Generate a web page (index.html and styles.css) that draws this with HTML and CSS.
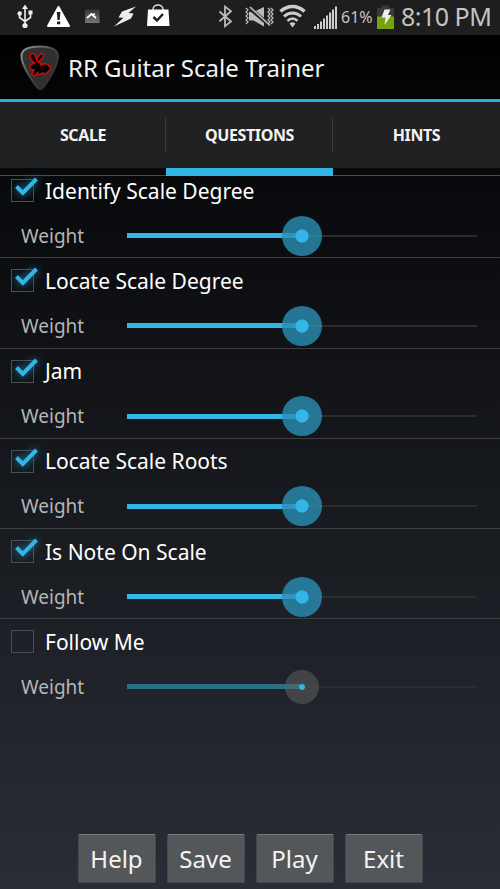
FILE: index.html
```html
<!DOCTYPE html>
<html lang="en">
<head>
<meta charset="utf-8">
<title>RR Guitar Scale Trainer</title>
<link rel="stylesheet" href="styles.css">
</head>
<body>
<div class="phone">
  <div class="status">
    <svg class="tray" width="180" height="34" viewBox="0 0 180 34">
      <g fill="none" stroke="#eee" stroke-width="1.6"><path d="M25 8v17M19.500 14v3.500l5.500 4 5.500-4V14"/></g>
      <g fill="#eee"><path d="M25 4.500l3 4.500h-6z"/><circle cx="25" cy="25.500" r="2.600"/><circle cx="19.700" cy="13.500" r="2.200"/><path d="M28.500 10.500h4v4h-4z"/></g>
      <path d="M58.500 7L69 26H48z" fill="#fff" stroke="#fff" stroke-width="2" stroke-linejoin="round"/>
      <path d="M56.800 12h3.600l-.7 8h-2.200zM57 21.500h3.200v2.800H57z" fill="#222"/>
      <path d="M85 9.500h14.500V23H85z" fill="url(#tile)"/>
      <path d="M87 18l4.500-4 4.500 4M92 15l3-1" fill="none" stroke="#fff" stroke-width="1.700"/>
      <path d="M136 6.500l-14 5-3.500 6 5 .3-9.500 8.700 17-8 2.500-5-5-.5z" fill="#eee"/>
      <path d="M153 11V9.500c0-6 10-6 10 0V11" fill="none" stroke="#ddd" stroke-width="1.500"/>
      <path d="M148 9.500h20.500l1 16.500h-22.500z" fill="#fff"/>
      <path d="M153.500 17l3.500 3.500 6-6.500" fill="none" stroke="#222" stroke-width="2.500"/>
      <defs><linearGradient id="tile" x2="0" y2="1"><stop stop-color="#353535"/><stop offset="1" stop-color="#777"/></linearGradient></defs>
    </svg>
    <svg class="signals" width="124" height="34" viewBox="215 0 124 34">
      <path d="M219.500 11.500l11.500 10-6 4.700V6.500l6 4.700-11.500 10" fill="none" stroke="#bbb" stroke-width="1.800"/>
      <path d="M249 12h4.500l10.500-5v19.500l-10.500-6H249z" fill="#bbb"/>
      <path d="M249 7.500l21 18" stroke="#222" stroke-width="4"/>
      <path d="M250 7l20 18.500" stroke="#bbb" stroke-width="1.700"/>
      <path d="M246 8l2 2-2 2 2 2-2 2 2 2-2 2 2 2-2 2M268 8l2 2-2 2 2 2-2 2 2 2-2 2 2 2-2 2M271 8l2 2-2 2 2 2-2 2 2 2-2 2 2 2-2 2" fill="none" stroke="#bbb" stroke-width="1.200"/>
      <g fill="none" stroke="#ccc"><path d="M280.500 11.500c7-6.700 17-6.700 24 0" stroke-width="3.600"/><path d="M284 16.500c5-4.700 12-4.700 17 0" stroke-width="3"/><path d="M287.500 20.800c3-3 7-3 10 0" stroke-width="2.600"/></g>
      <path d="M289.500 23.500c2-1.600 4-1.600 6 0l-3 4z" fill="#ccc"/>
      <path d="M314 26h2v3h-2zM317 24h2v5h-2zM320 21.500h2V29h-2zM323 18.500h2V29h-2zM326 15.500h2V29h-2zM329 12.500h2.200V29H329zM332 9.500h2V29h-2zM335 6.500h2V29h-2z" fill="#ccc"/>
    </svg>
    <span class="percent">61%</span>
    <svg class="battery" width="18" height="34" viewBox="377 0 18 34">
      <path d="M382 5.500h7V8h5v9h-17V8h5z" fill="#3a3a3a"/><path d="M377 16.500h17V29h-17z" fill="#73a50a"/>
      <path d="M384.500 9.500h6l-2.500 5.500h3.500l-7 10 1-7.500h-4z" fill="#eee"/>
    </svg>
    <span class="clock">8:10 PM</span>
  </div>

  <header class="titlebar">
    <svg class="pick" width="40" height="46" viewBox="0 0 40 46">
      <defs><linearGradient id="edge" x2="1" y2="1"><stop stop-color="#999"/><stop offset=".5" stop-color="#444"/><stop offset="1" stop-color="#252525"/></linearGradient></defs>
      <path d="M20 1.500C29 1.500 38 4 38 11c0 9-9 24-14 30.500-2.500 3.500-5 3.500-7.500 0C11 34 1.500 20 1.500 11 1.500 4 10 1.500 20 1.500z" fill="#303030" stroke="url(#edge)" stroke-width="2"/>
      <path d="M15 18c-4-2-6-7-4-9 3-2 5 3 6 7 0-4 3-8 6-7 2 3-3 6-5 8 4 1 4 3 2 4 3-3 8-3 9 0l2 2-2 3c-2 3-5 3-7 2-3 3-6 1-4-1-2 4-6 5-6 2l2-4c-4 0-5-3-3-5 1-2 3-2 4-2z" fill="#080000" stroke="#d80808" stroke-width="1.400"/>
    </svg>
    <h1 class="app-name">RR Guitar Scale Trainer</h1>
  </header>

  <nav class="tabs">
    <div class="tab">SCALE</div>
    <div class="tab selected">QUESTIONS</div>
    <div class="tab">HINTS</div>
  </nav>

  <main class="list">
    <section class="item">
      <div class="check-row"><span class="box"><svg class="tick" width="27" height="25" viewBox="0 0 27 25"><path d="M4.500 10.500l6.300 6.300L24.500 3"/></svg></span><span class="name n1">Identify Scale Degree</span></div>
      <div class="weight-row"><span class="weight">Weight</span><div class="slider"><div class="fill"></div><div class="thumb"></div></div></div>
    </section>
    <section class="item">
      <div class="check-row"><span class="box"><svg class="tick" width="27" height="25" viewBox="0 0 27 25"><path d="M4.500 10.500l6.300 6.300L24.500 3"/></svg></span><span class="name">Locate Scale Degree</span></div>
      <div class="weight-row"><span class="weight">Weight</span><div class="slider"><div class="fill"></div><div class="thumb"></div></div></div>
    </section>
    <section class="item">
      <div class="check-row"><span class="box"><svg class="tick" width="27" height="25" viewBox="0 0 27 25"><path d="M4.500 10.500l6.300 6.300L24.500 3"/></svg></span><span class="name">Jam</span></div>
      <div class="weight-row"><span class="weight">Weight</span><div class="slider"><div class="fill"></div><div class="thumb"></div></div></div>
    </section>
    <section class="item">
      <div class="check-row"><span class="box"><svg class="tick" width="27" height="25" viewBox="0 0 27 25"><path d="M4.500 10.500l6.300 6.300L24.500 3"/></svg></span><span class="name">Locate Scale Roots</span></div>
      <div class="weight-row"><span class="weight">Weight</span><div class="slider"><div class="fill"></div><div class="thumb"></div></div></div>
    </section>
    <section class="item">
      <div class="check-row"><span class="box"><svg class="tick" width="27" height="25" viewBox="0 0 27 25"><path d="M4.500 10.500l6.300 6.300L24.500 3"/></svg></span><span class="name">Is Note On Scale</span></div>
      <div class="weight-row"><span class="weight">Weight</span><div class="slider"><div class="fill"></div><div class="thumb"></div></div></div>
    </section>
    <section class="item off">
      <div class="check-row"><span class="box"></span><span class="name">Follow Me</span></div>
      <div class="weight-row"><span class="weight">Weight</span><div class="slider"><div class="fill"></div><div class="thumb"></div></div></div>
    </section>
  </main>

  <footer class="actions">
    <button class="btn">Help</button>
    <button class="btn">Save</button>
    <button class="btn">Play</button>
    <button class="btn">Exit</button>
  </footer>
</div>
</body>
</html>
```
FILE: styles.css
```css
* { box-sizing: border-box; }
body { margin: 0; font-family: "Noto Sans", sans-serif; background: #000; }
.phone {
  width: 500px; height: 889px; display: flex; flex-direction: column; overflow: hidden;
  color: #f3f3f3; background: linear-gradient(#020203, #08090b 170px, #292d35 889px);
}
.status { height: 35px; flex: none; display: flex; align-items: flex-start; background: #1e1e1e; color: #c4c4c4; white-space: nowrap; }
.tray { margin-right: 35px; flex: none; }
.signals, .battery { flex: none; }
.percent { width: 36px; margin: 0 0 0 2px; font-size: 16px; line-height: 35px; }
.battery { margin-right: 6px; }
.clock { font-size: 25px; line-height: 33px; letter-spacing: -.5px; }

.titlebar { height: 67px; flex: none; display: flex; padding: 10px 0 0 20px; background: linear-gradient(#000, #040506); border-bottom: 3px solid #2faddd; }
.pick { flex: none; }
.app-name { margin: 0 0 0 8px; font-size: 24px; font-weight: 400; line-height: 46px; white-space: nowrap; }

.tabs { height: 66px; flex: none; display: grid; grid-template-columns: 166px 167px 167px; background: #202122; }
.tab {
  font-size: 16px; font-weight: 700; line-height: 66px; text-align: center; letter-spacing: -.4px;
  background: linear-gradient(#3b3c3d, #3b3c3d) right 16px / 1px 34px no-repeat;
  border-bottom: 1px solid #4b4c4e;
}
.tab:last-child { background: none; }
.tab.selected { border-bottom: 8px solid #33b5e5; }
.tab.selected { background-position: right 16px; }

.list { flex: 1; }
.item { height: 90.25px; border-bottom: 1px solid #3c3e42; }
.item.off { border: 0; }
.check-row { height: 45px; display: flex; align-items: center; padding-left: 11px; }
.box { width: 23px; height: 23px; flex: none; border: 1px solid #4c4f52; position: relative; }
.tick { position: absolute; left: 0; top: -4px; filter: drop-shadow(0 0 4px #1684b5); }
.tick path { fill: none; stroke: #33b5e5; stroke-width: 4; }
.name { margin-left: 11px; font-size: 21px; color: #fff; white-space: nowrap; }
.weight-row { height: 45px; display: flex; align-items: center; padding: 0 23px 0 21px; }
.weight { width: 106px; font-size: 19px; color: #b5b6b7; }
.slider { flex: 1; height: 40px; display: grid; align-items: center; background: linear-gradient(#2a2c2e, #2a2c2e) 0 19px / 100% 2px no-repeat; }
.fill, .thumb { grid-area: 1 / 1; }
.fill { width: 175px; height: 5px; background: #33b5e5; }
.thumb { width: 40px; height: 40px; margin-left: 155px; border-radius: 50%; background: radial-gradient(circle, #33b5e5 6.2px, rgba(42, 142, 181, .8) 7px); }
.off .fill { background: #2a6e88; }
.off .thumb { width: 34px; height: 34px; margin-left: 158px; background: radial-gradient(circle, #33b5e5 2.5px, rgba(100, 100, 100, .5) 3.4px); }

.actions { flex: none; display: flex; justify-content: center; gap: 11px; padding-bottom: 6px; }
.btn {
  width: 78px; height: 49px; padding: 0; border: 1px solid #47494c; border-top-color: #77797b; border-radius: 2px;
  background: #54575a; color: #f3f3f3; font: 24px/47px "Noto Sans", sans-serif; 
}
```
